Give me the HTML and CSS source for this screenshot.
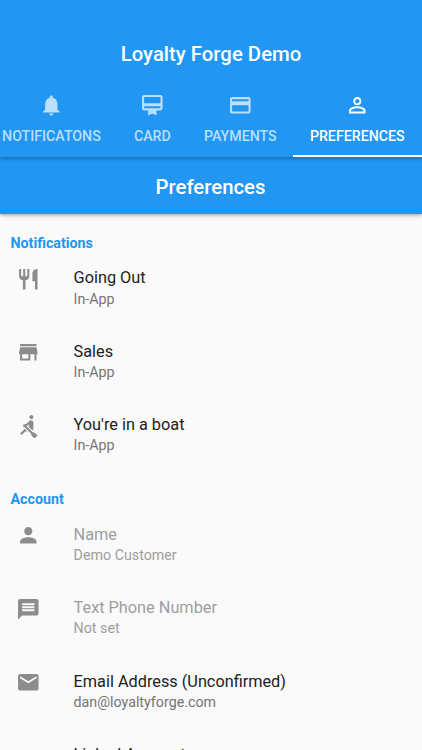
FILE: index.html
```html
<!DOCTYPE html>
<html lang="en">
<head>
<meta charset="utf-8">
<title>Loyalty Forge Demo</title>
<link rel="stylesheet" href="styles.css">
</head>
<body>
<header class="app-bar">
  <h1 class="app-title">Loyalty Forge Demo</h1>
  <nav class="tabs">
    <div class="tab"><svg class="icon" viewBox="0 0 24 24"><path d="M12 22c1.1 0 2-.9 2-2h-4c0 1.1.89 2 2 2zm6-6v-5c0-3.07-1.64-5.64-4.5-6.32V4c0-.83-.67-1.5-1.5-1.5s-1.5.67-1.5 1.5v.68C7.63 5.36 6 7.92 6 11v5l-2 2v1h16v-1l-2-2z"/></svg><span>NOTIFICATONS</span></div>
    <div class="tab"><svg class="icon" viewBox="0 0 24 24"><path d="M20 2H4c-1.11 0-2 .89-2 2v11c0 1.11.89 2 2 2h4v5l4-2 4 2v-5h4c1.11 0 2-.89 2-2V4c0-1.11-.89-2-2-2zm0 13H4v-2h16v2zm0-5H4V4h16v6z"/></svg><span>CARD</span></div>
    <div class="tab"><svg class="icon" viewBox="0 0 24 24"><path d="M20 4H4c-1.11 0-1.99.89-1.99 2L2 18c0 1.11.89 2 2 2h16c1.11 0 2-.89 2-2V6c0-1.11-.89-2-2-2zm0 14H4v-6h16v6zm0-10H4V6h16v2z"/></svg><span>PAYMENTS</span></div>
    <div class="tab active"><svg class="icon" viewBox="0 0 24 24"><path d="M12 5.9c1.16 0 2.1.94 2.1 2.1s-.94 2.1-2.1 2.1S9.9 9.16 9.9 8s.94-2.1 2.1-2.1m0 9c2.97 0 6.1 1.46 6.1 2.1v1.1H5.9V17c0-.64 3.13-2.1 6.1-2.1M12 4C9.79 4 8 5.79 8 8s1.79 4 4 4 4-1.79 4-4-1.79-4-4-4zm0 9c-2.67 0-8 1.34-8 4v3h16v-3c0-2.66-5.33-4-8-4z"/></svg><span>PREFERENCES</span></div>
  </nav>
</header>
<div class="page-bar"><h2 class="page-title">Preferences</h2></div>
<main class="content">
  <section class="group">
    <h3 class="group-title">Notifications</h3>
    <div class="row"><svg class="icon" viewBox="0 0 24 24"><path d="M11 9H9V2H7v7H5V2H3v7c0 2.12 1.66 3.84 3.75 3.97V22h2.5v-9.03C11.34 12.84 13 11.12 13 9V2h-2v7zm5-3v8h2.5v8H21V2c-2.76 0-5 2.24-5 4z"/></svg><div><div class="title">Going Out</div><div class="subtitle">In-App</div></div></div>
    <div class="row"><svg class="icon" viewBox="0 0 24 24"><path d="M20 4H4v2h16V4zm1 10v-2l-1-5H4l-1 5v2h1v6h10v-6h4v6h2v-6h1zm-9 4H6v-4h6v4z"/></svg><div><div class="title">Sales</div><div class="subtitle">In-App</div></div></div>
    <div class="row"><svg class="icon" viewBox="0 0 24 24"><path d="M8.5 14.5L4 19l1.5 1.5L9 17h2l-2.5-2.5zM15 1c-1.1 0-2 .9-2 2s.9 2 2 2 2-.9 2-2-.9-2-2-2zm6 20.01L18 24l-2.99-3.01V19.5l-7.1-7.09c-.31.05-.61.07-.91.07v-2.16c1.66.03 3.61-.87 4.67-2.04l1.4-1.55c.19-.21.43-.38.69-.5.29-.14.62-.23.96-.23h.03C15.99 6.01 17 7.02 17 8.26v5.75c0 .84-.35 1.61-.92 2.16l-3.58-3.58v-2.27c-.63.52-1.43 1.02-2.29 1.39L16.5 18H18l3 3.01z"/></svg><div><div class="title">You're in a boat</div><div class="subtitle">In-App</div></div></div>
  </section>
  <section class="group">
    <h3 class="group-title">Account</h3>
    <div class="row disabled"><svg class="icon" viewBox="0 0 24 24"><path d="M12 12c2.21 0 4-1.79 4-4s-1.79-4-4-4-4 1.79-4 4 1.79 4 4 4zm0 2c-2.67 0-8 1.34-8 4v2h16v-2c0-2.66-5.33-4-8-4z"/></svg><div><div class="title">Name</div><div class="subtitle">Demo Customer</div></div></div>
    <div class="row disabled"><svg class="icon" viewBox="0 0 24 24"><path d="M20 2H4c-1.1 0-1.99.9-1.99 2L2 22l4-4h14c1.1 0 2-.9 2-2V4c0-1.1-.9-2-2-2zm-2 12H6v-2h12v2zm0-3H6V9h12v2zm0-3H6V6h12v2z"/></svg><div><div class="title">Text Phone Number</div><div class="subtitle">Not set</div></div></div>
    <div class="row"><svg class="icon" viewBox="0 0 24 24"><path d="M20 4H4c-1.1 0-1.99.9-1.99 2L2 18c0 1.1.9 2 2 2h16c1.1 0 2-.9 2-2V6c0-1.1-.9-2-2-2zm0 4l-8 5-8-5V6l8 5 8-5v2z"/></svg><div><div class="title">Email Address (Unconfirmed)</div><div class="subtitle">dan@loyaltyforge.com</div></div></div>
    <div class="row"><div class="icon"></div><div><div class="title">Linked Accounts</div></div></div>
  </section>
</main>
</body>
</html>
```
FILE: styles.css
```css
* { box-sizing: border-box; }

body {
  margin: 0;
  height: 750px;
  overflow: hidden;
  display: flex;
  flex-direction: column;
  background: #fafafa;
  font-family: Roboto, "Liberation Sans", sans-serif;
}

h1, h2, h3 { margin: 0; }

.icon {
  width: 24.6px;
  height: 24.6px;
  flex: none;
  display: block;
  fill: currentColor;
}

.app-bar, .page-bar {
  position: relative;
  flex: none;
  background: #2196f3;
  color: #fff;
  box-shadow: 0 1px 3px rgba(0, 0, 0, .26), 0 2px 5px rgba(0, 0, 0, .12);
}

.app-bar {
  z-index: 2;
  height: 157px;
  padding-top: 25px;
}

.app-title, .page-title {
  height: 58px;
  line-height: 59px;
  text-align: center;
  font-size: 20.35px;
  font-weight: 500;
}

.page-title { line-height: 60px; padding-right: 1px; }

.tabs {
  display: flex;
  justify-content: flex-end;
  height: 74px;
  overflow: hidden;
}

.tab {
  flex: none;
  display: flex;
  flex-direction: column;
  align-items: center;
  padding: 10px 16.6px 0;
  color: rgba(255, 255, 255, .7);
  font-size: 14.2px;
  font-weight: 500;
  line-height: 17px;
}

.tab span { margin-top: 10px; }

.tab.active {
  padding: 10px 17.4px 0 16.6px;
  color: #fff;
  border-bottom: 2px solid #fff;
}

.page-bar {
  z-index: 1;
  height: 57px;
}

.content { flex: 1; min-height: 0; overflow: hidden; }

.group { height: 256.4px; padding-top: 20px; }

.group-title {
  padding-left: 10.5px;
  margin-bottom: 11px;
  line-height: 18px;
  font-size: 14.25px;
  font-weight: 700;
  color: #2196f3;
}

.row {
  display: flex;
  gap: 32.6px;
  height: 73.4px;
  padding: 4px 16.4px 0;
  color: #8c8c8c;
}

.title {
  margin-top: 1.4px;
  line-height: 20px;
  font-size: 16.3px;
  color: #212121;
}

.subtitle {
  margin-top: 1.2px;
  line-height: 18px;
  font-size: 14.25px;
  color: #757575;
}

.disabled .title, .disabled .subtitle { color: #9e9e9e; }
```
